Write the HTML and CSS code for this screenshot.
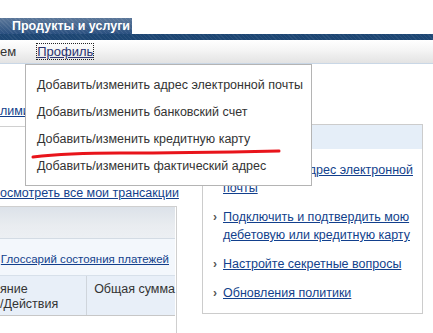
FILE: index.html
```html
<!DOCTYPE html>
<html lang="ru">
<head>
    <meta charset="UTF-8">
    <title>Профиль</title>
    <link rel="stylesheet" href="styles.css">
</head>
<body>
    <div class="page">
        <!-- Tabs -->
        <div class="tabs">
            <div class="tab">Продукты и услуги</div>
        </div>
        <div class="band"></div>

        <!-- Sub navigation -->
        <div class="subnav">
            <span class="subnav-item">ем</span>
            <a class="subnav-item subnav-active" href="#">Профиль</a>
        </div>

        <div class="content">
            <div class="left-col">
                <div class="limit-row"><a href="#">лимит</a></div>
                <div class="divider"></div>
                <div class="all-row"><a href="#">осмотреть все мои трансакции</a></div>

                <div class="pay-box">
                    <div class="pay-head"></div>
                    <div class="pay-bar"><a href="#">Глоссарий состояния платежей</a></div>
                    <div class="pay-cols">
                        <div class="pay-col pay-col-state">яние<br>/Действия</div>
                        <div class="pay-col pay-col-sum">Общая сумма</div>
                    </div>
                </div>
            </div>

            <div class="right-col">
                <div class="side-box">
                    <div class="side-head"></div>
                    <ul class="side-list">
                        <li><a href="#">Подтвердить адрес электронной почты</a></li>
                        <li><a href="#">Подключить и подтвердить мою дебетовую или кредитную карту</a></li>
                        <li><a href="#">Настройте секретные вопросы</a></li>
                        <li><a href="#">Обновления политики</a></li>
                    </ul>
                </div>
            </div>
        </div>

        <!-- Profile dropdown menu -->
        <ul class="dropdown">
            <li>Добавить/изменить адрес электронной почты</li>
            <li>Добавить/изменить банковский счет</li>
            <li>Добавить/изменить кредитную карту</li>
            <li>Добавить/изменить фактический адрес</li>
        </ul>

        <!-- Hand drawn red mark -->
        <svg class="scribble" width="433" height="333" viewBox="0 0 433 333">
            <path d="M33 157 C 50 155, 80 153, 120 153 S 230 152, 279 151" fill="none" stroke="#e8141b" stroke-width="3" stroke-linecap="round"/>
        </svg>
    </div>
</body>
</html>
```

FILE: styles.css
```css
body {
    margin: 0;
    overflow: hidden;
    background: #fff;
    font-family: "Liberation Sans", Arial, sans-serif;
    font-size: 12.5px;
    color: #333;
}

a {
    color: #123f8c;
}

.page {
    position: relative;
    width: 433px;
    height: 333px;
}

.tabs {
    display: flex;
    padding-top: 18px;
}

.tab {
    width: 132px;
    height: 16px;
    line-height: 17px;
    padding-left: 12px;
    box-sizing: border-box;
    color: #fff;
    font-weight: bold;
    font-size: 12.5px;
    background:
        repeating-linear-gradient(45deg, rgba(255,255,255,0.07) 0 1px, transparent 1px 3px),
        linear-gradient(#5b7799, #2a5080);
}

.band {
    height: 6px;
    background:
        repeating-linear-gradient(45deg, rgba(255,255,255,0.06) 0 1px, transparent 1px 3px),
        #1d4673;
}

.subnav {
    display: flex;
    align-items: center;
    height: 23px;
    background: linear-gradient(#ffffff, #f6f6f6 40%, #e3e3e3);
    border-bottom: 1px solid #c9d7e6;
}

.subnav-item {
    color: #333;
    font-size: 13px;
}

.subnav-active {
    margin-left: 21px;
    color: #2a3370;
    outline: 1px dotted #222;
    outline-offset: 0;
    line-height: 15px;
}

.content {
    display: flex;
}

.left-col {
    width: 177px;
    white-space: nowrap;
}

.limit-row {
    height: 62px;
    display: flex;
    align-items: flex-end;
}

.limit-row a {
    line-height: 15px;
    margin-bottom: 7px;
}

.divider {
    height: 1px;
    background: #d0d0d0;
}

.all-row {
    padding-top: 58px;
    height: 21px;
    line-height: 16px;
}

.pay-box {
    height: 130px;
    border-top: 1px solid #cfcfcf;
    border-right: 1px solid #cfcfcf;
}

.pay-head {
    height: 31px;
    margin-right: 1px;
    background: linear-gradient(#dce2e9, #e9ecf0 60%, #eceff3);
    border-bottom: 1px solid #d3dbe4;
}

.pay-bar {
    height: 36px;
    margin-right: 1px;
    background: #f3f7fc;
    text-align: right;
    line-height: 40px;
    font-size: 11.5px;
    padding-right: 6px;
    border-bottom: 1px solid #d7e0ea;
}

.pay-cols {
    display: flex;
    height: 39px;
    margin-right: 1px;
    background: #e8eff8;
    border-bottom: 1px solid #c7c7c7;
}

.pay-col {
    padding-top: 6px;
    line-height: 15px;
}

.pay-col-state {
    width: 93px;
    border-right: 1px solid #cfd5dc;
}

.pay-col-sum {
    padding-left: 7px;
}

.right-col {
    padding-left: 25px;
    padding-top: 60px;
}

.side-box {
    width: 219px;
    height: 188px;
    border: 1px solid #cccccc;
}

.side-head {
    height: 24px;
    background: #e5eef8;
}

.side-list {
    list-style: none;
    margin: 0;
    padding: 12px 8px 0 20px;
}

.side-list li {
    position: relative;
    line-height: 18px;
    margin-bottom: 11px;
}

.side-list li::before {
    content: "›";
    position: absolute;
    left: -10px;
    top: 0;
    color: #555;
    font-weight: bold;
    font-size: 12px;
}

.dropdown {
    position: absolute;
    left: 25px;
    top: 64px;
    width: 285px;
    margin: 0;
    padding: 7px 0 5px;
    list-style: none;
    background: #fff;
    border: 1px solid #b4b4b4;
}

.dropdown li {
    height: 27px;
    line-height: 27px;
    padding-left: 11px;
    color: #333;
    white-space: nowrap;
}

.scribble {
    position: absolute;
    left: 0;
    top: 0;
    pointer-events: none;
}
```
